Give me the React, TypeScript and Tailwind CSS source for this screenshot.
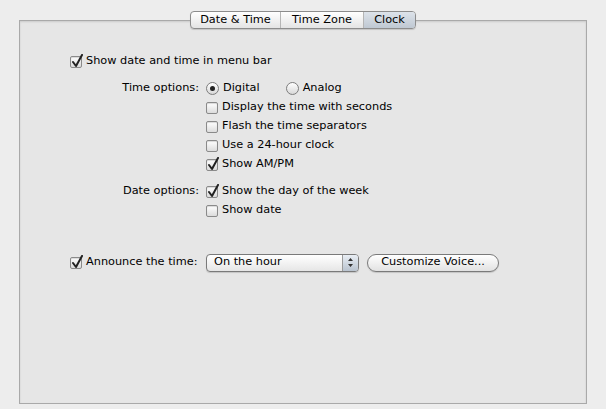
import React from 'react';

const font = { fontFamily: '"DejaVu Sans", "Liberation Sans", sans-serif' };

const Check = ({ checked }: { checked?: boolean }) => (
  <span className="relative inline-block w-[12px] h-[12px] shrink-0 rounded-[2px] border border-[#8a8a8a] bg-gradient-to-b from-[#ffffff] to-[#dcdcdc] shadow-[inset_0_1px_1px_rgba(0,0,0,0.15)]">
    {checked && (
      <svg className="absolute -top-[3px] left-[0px]" width="13" height="14" viewBox="0 0 13 14">
        <path d="M2 8 L5 12 L11 1" fill="none" stroke="#222" strokeWidth="2" strokeLinecap="round" strokeLinejoin="round" />
      </svg>
    )}
  </span>
);

const Radio = ({ on }: { on?: boolean }) => (
  <span className="relative inline-flex items-center justify-center w-[13px] h-[13px] shrink-0 rounded-full border border-[#7d7d7d] bg-gradient-to-b from-[#ffffff] to-[#d8d8d8]">
    {on && <span className="w-[5px] h-[5px] rounded-full bg-[#222]" />}
  </span>
);

const Row = ({ label, children }: { label?: string; children: React.ReactNode }) => (
  <div className="flex items-center h-[19px]">
    <div className="w-[129px] text-right whitespace-nowrap">{label}</div>
    <div className="flex items-center gap-[4px] ml-[7px] whitespace-nowrap">{children}</div>
  </div>
);

export default function App() {
  return (
    <div className="w-[606px] h-[409px] bg-[#ededed] text-[11.3px] text-black overflow-hidden" style={font}>
      <div className="flex flex-col pt-[11px] px-[19px]">
        <div className="relative z-10 flex justify-center -mb-[9px]">
          <div className="flex h-[18px] rounded-[4px] border border-[#8c8c8c] bg-gradient-to-b from-[#ffffff] to-[#e4e4e4] shadow-[0_1px_1px_rgba(0,0,0,0.15)] overflow-hidden">
            <div className="w-[90px] flex items-center justify-center border-r border-[#b5b5b5]">Date &amp; Time</div>
            <div className="w-[83px] flex items-center justify-center border-r border-[#b5b5b5]">Time Zone</div>
            <div className="w-[51px] flex items-center justify-center bg-gradient-to-b from-[#dde3ea] to-[#bfc8d2]">Clock</div>
          </div>
        </div>
        <div className="h-[384px] border border-[#a9a9a9] bg-[#e6e6e6] shadow-[inset_0_1px_2px_rgba(0,0,0,0.12)] pt-[31px] pl-[50px]">
          <div className="flex items-center gap-[4px] h-[19px]">
            <Check checked />
            <span>Show date and time in menu bar</span>
          </div>
          <div className="mt-[8px]">
            <Row label="Time options:">
              <Radio on />
              <span>Digital</span>
              <span className="ml-[22px] flex"><Radio /></span>
              <span>Analog</span>
            </Row>
            <Row>
              <Check />
              <span>Display the time with seconds</span>
            </Row>
            <Row>
              <Check />
              <span>Flash the time separators</span>
            </Row>
            <Row>
              <Check />
              <span>Use a 24-hour clock</span>
            </Row>
            <Row>
              <Check checked />
              <span>Show AM/PM</span>
            </Row>
          </div>
          <div className="mt-[8px]">
            <Row label="Date options:">
              <Check checked />
              <span>Show the day of the week</span>
            </Row>
            <Row>
              <Check />
              <span>Show date</span>
            </Row>
          </div>
          <div className="mt-[33px] flex items-center h-[19px]">
            <div className="w-[129px] flex items-center gap-[4px] whitespace-nowrap">
              <Check checked />
              <span>Announce the time:</span>
            </div>
            <div className="ml-[7px] flex items-center w-[153px] h-[18px] rounded-[4px] border border-[#7a7a7a] bg-gradient-to-b from-[#ffffff] to-[#e6e6e6] shadow-[0_1px_1px_rgba(0,0,0,0.15)] overflow-hidden">
              <span className="flex-1 pl-[7px]">On the hour</span>
              <span className="w-[16px] h-full flex items-center justify-center border-l border-[#9a9a9a] bg-gradient-to-b from-[#e9eef4] to-[#b9c3cf]">
                <svg width="7" height="11" viewBox="0 0 7 11">
                  <path d="M1 4 L3.5 1 L6 4 Z M1 7 L3.5 10 L6 7 Z" fill="#333" />
                </svg>
              </span>
            </div>
            <div className="ml-[8px] flex items-center justify-center w-[132px] h-[18px] rounded-full border border-[#7a7a7a] bg-gradient-to-b from-[#ffffff] to-[#e2e2e2] shadow-[0_1px_1px_rgba(0,0,0,0.15)]">
              Customize Voice...
            </div>
          </div>
        </div>
      </div>
    </div>
  );
}
